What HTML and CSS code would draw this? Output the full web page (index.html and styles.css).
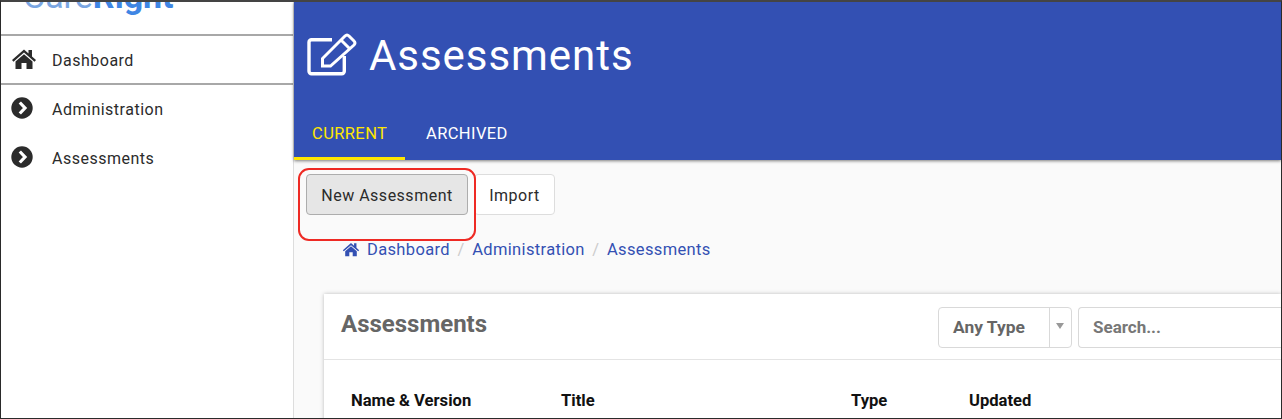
FILE: index.html
```html
<!DOCTYPE html>
<html lang="en">
<head>
<meta charset="utf-8">
<title>Assessments</title>
<link rel="stylesheet" href="styles.css">
</head>
<body>
<div class="frame">
  <div class="sidebar">
    <div class="logo"><span>Care<b>Right</b></span></div>
    <a class="side-item side-home" href="#">
      <svg class="side-icon" width="26" height="22" viewBox="0 0 26 22"><path d="M13 1.500 1 12l1.500 1.700L13 4.600l10.500 9.100L25 12l-4-3.500V2h-3.500v3.400z" fill="#2b2b2b"/><path d="M4.500 13.500 13 6.200l8.500 7.300V21h-6v-6h-5v6h-6z" fill="#2b2b2b"/></svg>
      Dashboard
    </a>
    <a class="side-item" href="#">
      <svg class="side-icon" width="26" height="22" viewBox="0 0 26 22"><circle cx="11" cy="11" r="10.700" fill="#2b2b2b"/><path d="M8.800 5.500 14 11l-5.200 5.500" fill="none" stroke="#fff" stroke-width="3.200"/></svg>
      Administration
    </a>
    <a class="side-item" href="#">
      <svg class="side-icon" width="26" height="22" viewBox="0 0 26 22"><circle cx="11" cy="11" r="10.700" fill="#2b2b2b"/><path d="M8.800 5.500 14 11l-5.200 5.500" fill="none" stroke="#fff" stroke-width="3.200"/></svg>
      Assessments
    </a>
  </div>
  <div class="main">
    <div class="header">
      <div class="title-row">
        <svg width="50" height="44" viewBox="0 0 50 44"><path d="M25 6.700H4.500a2.500 2.500 0 0 0-2.500 2.500v29.100a2.500 2.500 0 0 0 2.500 2.500h30.300a2.500 2.500 0 0 0 2.500-2.500V23" fill="none" stroke="#fff" stroke-width="3.400"/><path d="M15.500 33v-7.500L38 3q2-2 4 0l5 5q2 2 0 4L23.500 33zM34 7l9 9" fill="none" stroke="#fff" stroke-width="3"/></svg>
        <h1>Assessments</h1>
      </div>
      <div class="tabs">
        <a class="tab active" href="#">CURRENT</a>
        <a class="tab" href="#">ARCHIVED</a>
      </div>
    </div>
    <div class="actions">
      <button class="btn btn-on">New Assessment</button>
      <button class="btn">Import</button>
      <div class="callout"></div>
    </div>
    <div class="crumbs">
      <svg width="18" height="15" viewBox="0 0 26 22"><path d="M13 1.500 1 12l1.500 1.700L13 4.600l10.500 9.100L25 12l-4-3.500V2h-3.500v3.400z" fill="#3350b3"/><path d="M4.500 13.500 13 6.200l8.500 7.300V21h-6v-6h-5v6h-6z" fill="#3350b3"/></svg>
      <a href="#">Dashboard</a>
      <span class="sep">/</span>
      <a href="#">Administration</a>
      <span class="sep">/</span>
      <a href="#">Assessments</a>
    </div>
    <div class="card">
      <div class="card-head">
        <h2>Assessments</h2>
        <div class="filters">
          <div class="type-select">
            <span class="type-label">Any Type</span>
            <span class="type-arrow"></span>
          </div>
          <div class="search">Search...</div>
        </div>
      </div>
      <div class="table-head">
        <span class="col-name">Name &amp; Version</span>
        <span class="col-title">Title</span>
        <span class="col-type">Type</span>
        <span class="col-updated">Updated</span>
      </div>
    </div>
  </div>
</div>
</body>
</html>
```

FILE: styles.css
```css
* {
  margin: 0;
  padding: 0;
  box-sizing: border-box;
}

html, body {
  height: 100%;
  overflow: hidden;
}

body {
  background-color: #fff;
  color: #2b2b2b;
  font-family: Roboto, "Liberation Sans", sans-serif;
}

a {
  text-decoration: none;
}

.frame {
  display: flex;
  width: 1282px;
  height: 419px;
  border: 1px solid #2a2a2a;
  border-top: 2px solid #444;
  overflow: hidden;
}

/* left menu */
.sidebar {
  flex: 0 0 293px;
  border-right: 1px solid #ddd;
  background-color: #fff;
}

.logo {
  display: flex;
  align-items: flex-end;
  height: 32px;
  padding-left: 22px;
  padding-bottom: 20px;
  overflow: hidden;
  color: #7aa6e2;
  font-size: 34px;
  line-height: 36px;
}

.logo span {
  display: block;
  white-space: nowrap;
}

.logo b {
  color: #3f86e4;
}

.side-item {
  display: flex;
  align-items: center;
  height: 49px;
  padding-left: 10px;
  padding-top: 0;
  color: #2b2b2b;
  font-size: 16px;
  letter-spacing: 0.5px;
}

.side-home {
  height: 51px;
  padding-top: 2px;
  border-top: 2px solid #a8a8a8;
  border-bottom: 2px solid #a8a8a8;
}

.side-icon {
  margin-right: 15px;
  margin-top: -3px;
}

/* right side */
.main {
  flex: 1;
  min-width: 0;
  background-color: #fafafa;
}

.header {
  height: 158px;
  background-color: #3350b3;
  box-shadow: 0 1px 3px rgba(0, 0, 0, 0.5);
  position: relative;
}

.title-row {
  display: flex;
  align-items: center;
  height: 106px;
  padding-left: 13px;
  color: #fff;
}

.title-row h1 {
  margin-left: 12px;
  font-size: 42px;
  font-weight: 400;
  letter-spacing: 0.95px;
}

.tabs {
  display: flex;
  height: 52px;
}

.tab {
  display: flex;
  align-items: center;
  padding: 0 18px;
  padding-bottom: 1px;
  color: #fff;
  font-size: 16.5px;
  font-weight: 400;
  letter-spacing: 0.4px;
}

.tab.active {
  width: 111px;
  color: #ffe600;
  border-bottom: 3px solid #ffe600;
  padding-bottom: 0;
  padding-top: 2px;
  white-space: nowrap;
}

.tab + .tab {
  padding-left: 21px;
}

.actions {
  position: relative;
  display: flex;
  gap: 6px;
  padding: 14px 0 0 12px;
}

.btn {
  height: 41px;
  padding: 1px 14px 0;
  border: 1px solid #ddd;
  border-radius: 4px;
  background-color: #fff;
  color: #2b2b2b;
  font-family: inherit;
  font-size: 16px;
  letter-spacing: 0.5px;
}

.btn-on {
  width: 162px;
  background-color: #e6e6e6;
  border-color: #adadad;
}

.btn + .btn {
  width: 81px;
}

.callout {
  position: absolute;
  left: 4px;
  top: 8px;
  width: 178px;
  height: 73px;
  border: 2px solid #ee2a24;
  border-radius: 11px;
}

.crumbs {
  display: flex;
  align-items: center;
  height: 20px;
  margin-top: 24px;
  padding-left: 48px;
  font-size: 16.5px;
  letter-spacing: 0.35px;
}

.crumbs svg {
  margin-right: 7px;
}

.crumbs a {
  color: #3350b3;
}

.sep {
  margin: 0 7.500px;
  color: #ccc;
}

.card {
  margin: 35px 0 0 30px;
  background-color: #fff;
  box-shadow: 0 0 4px rgba(0, 0, 0, 0.25);
  height: 140px;
}

.card-head {
  display: flex;
  align-items: flex-start;
  justify-content: space-between;
  height: 66px;
  padding-left: 18px;
  padding-top: 13px;
  border-bottom: 1px solid #e4e4e4;
}

.card-head h2 {
  margin-top: 3px;
  margin-left: -1px;
  color: #666;
  font-size: 24px;
  font-weight: 700;
}

.filters {
  display: flex;
  gap: 6px;
}

.type-select {
  display: flex;
  width: 134px;
  height: 41px;
  border: 1px solid #d9d9d9;
  border-radius: 4px;
}

.type-label {
  flex: 1;
  padding-left: 14px;
  border-right: 1px solid #d9d9d9;
  color: #666;
  font-size: 17.400px;
  font-weight: 700;
  line-height: 39px;
}

.type-arrow {
  position: relative;
  flex: 0 0 21px;
}

.type-arrow::after {
  content: "";
  position: absolute;
  left: 6px;
  top: 15px;
  border-left: 4px solid transparent;
  border-right: 4px solid transparent;
  border-top: 6px solid #999;
}

.search {
  width: 203px;
  height: 41px;
  padding-left: 14px;
  border: 1px solid #d9d9d9;
  border-right: 0;
  border-radius: 4px 0 0 4px;
  color: #777;
  font-size: 17px;
  font-weight: 700;
  line-height: 39px;
}

.table-head {
  display: grid;
  grid-template-columns: 210px 290px 118px 1fr;
  padding: 31px 0 0 27px;
  color: #111;
  font-size: 16.6px;
  font-weight: 700;
}
```
